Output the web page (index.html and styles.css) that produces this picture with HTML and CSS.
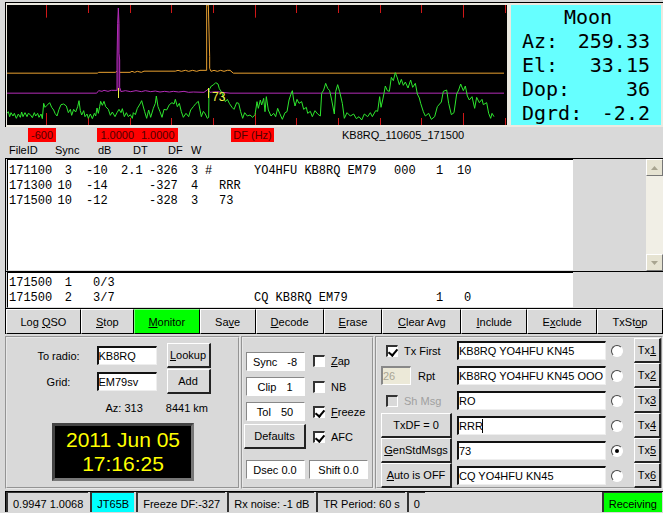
FILE: index.html
```
<!DOCTYPE html>
<html lang="en">
  <head>
    <meta charset="UTF-8" />
    <meta name="viewport" content="width=device-width, initial-scale=1.0" />
    <title>WSJT</title>
    <link rel="stylesheet" href="styles.css">
  </head>
  <body>
    <main class="app">
      <!-- Spectrum and moon data -->
      <section class="top">
        <svg class="graph" viewBox="21 15 1500 360" role="img" aria-label="Spectrum">
          <rect x="21" y="15" width="1500" height="360" fill="#000" />
          <g stroke="#d01818" stroke-width="3">
            <path d="M139.500 15V53M265.500 15V39M391.500 15V39M514.500 15V39M640.500 15V39M766.500 15V53M889.500 15V39M1015.500 15V39M1141.500 15V39M1264.500 15V39M1390.500 15V53M1516.500 15V39" />
            <path d="M139.500 339V375M265.500 354V375M391.500 354V375M514.500 354V375M640.500 354V375M766.500 339V375M889.500 354V375M1015.500 354V375M1141.500 354V375M1264.500 354V375M1390.500 339V375M1516.500 354V375" />
          </g>
          <g fill="none" stroke-width="3">
            <path stroke="#e8a030" d="M21 219.500H292L296 217H346L354 212L360 217H390L396 214L404 217L412 214L424 217L432 213.500H526L534 211L544 214L556 211L566 214L578 211L590 214L600 211H620V15H625L629 170V205L633 214L642 211L652 214L662 211L672 214L682 211L690 211L700 219.500H1512" />
            <path fill="#54105c" stroke="#b42cb8" d="M348 272L351 270V180L353 70L355 24L357 70V160L359 180V262L363 274" />
            <path stroke="#b42cb8" d="M21 279.500H290L296 272L306 274L312 271L324 274L334 271H348M362 275L376 272L392 275L408 272L424 275L436 272L452 275L466 273L480 276L494 274L508 276L520 274L536 276L552 274L566 277L580 276L612 277L624 268L630 277L650 275L690 279.500H1512" />
            <path class="trace" d="M21 340L25 335L29 350L33 338L39 348L43 340L49 355L55 342L61 352L65 336L69 350L75 338L81 350L85 340L91 344L97 353L103 338L107 348L113 340L117 352L123 342L127 356L131 310L135 322L141 316L149 308L155 322L161 330L165 340L171 348L177 328L183 314L191 312L199 318L205 338L211 328L215 346L221 328L227 336L233 320L237 302L241 332L245 345L251 332L255 350L261 342L265 355L271 342L277 356L283 340L287 348L291 324L295 340L299 320L302 304L307 316L312 304L317 320L325 328L331 346L337 336L345 350L351 338L357 328L363 338L367 326L373 350L379 338L385 350L391 344L397 355L400 338L406 344L412 325L420 312L425 302L434 335L440 355L446 330L452 352L460 325L466 310L469 288L474 320L480 335L486 352L492 328L500 330L508 314L516 308L522 312L526 298L532 320L538 310L544 335L550 352L558 340L566 350L572 330L580 320L588 310L595 304L600 330L604 350L610 334L616 342L622 355L626 352L627 270L634 258L640 255L647 248L654 252L658 266L664 275L670 290L676 305L682 298L688 310L696 322L702 328L710 308L716 310L722 335L728 355L734 338L742 348L750 345L758 352L765 344L771 305L775 325L781 300L785 315L791 295L795 335L799 290L805 330L813 348L821 340L827 350L833 325L839 340L847 358L855 338L861 335L867 300L873 282L877 272L881 300L885 318L891 298L897 310L905 305L911 328L919 322L923 340L931 334L937 350L945 332L953 342L961 348L965 280L971 270L977 250L983 265L989 272L995 300L1003 342L1007 275L1013 254L1019 275L1027 310L1033 355L1041 338L1051 348L1061 342L1069 356L1077 350L1085 360L1093 342L1103 350L1111 338L1117 350L1127 332L1133 334L1139 290L1143 322L1148 300L1152 280L1156 258L1162 272L1168 274L1174 232L1180 242L1186 218L1192 234L1198 254L1204 238L1210 256L1216 246L1224 264L1232 240L1238 262L1246 250L1252 282L1258 294L1262 310L1270 335L1276 348L1286 340L1294 358L1304 350L1312 320L1324 306L1330 274L1340 270L1346 310L1354 344L1362 338L1370 282L1376 270L1382 252L1390 272L1396 258L1402 288L1408 300L1416 290L1424 325L1430 292L1438 308L1446 298L1450 314L1460 308L1466 340L1472 355L1476 340L1482 350" />
            <path stroke="#f0f040" d="M355.500 264V294M625.500 264V294" />
          </g>
          <text class="marker" x="636" y="303">73</text>
        </svg>
        <aside class="moon">
          <div class="moon-title">Moon</div>
          <div class="moon-row"><span>Az:</span><span>259.33</span></div>
          <div class="moon-row"><span>El:</span><span>33.15</span></div>
          <div class="moon-row"><span>Dop:</span><span>36</span></div>
          <div class="moon-row"><span>Dgrd:</span><span>-2.2</span></div>
        </aside>
      </section>

      <section class="scale">
        <span class="tag tag-left">-600</span>
        <span class="tag tag-mid"><span>1.0000</span><span>1.0000</span></span>
        <span class="tag tag-df">DF (Hz)</span>
        <span class="filename">KB8RQ_110605_171500</span>
      </section>

      <!-- Decoded text -->
      <section class="decoded">
        <div class="paper">
          <table class="log log-main">
            <thead>
              <tr><th class="c-id">FileID</th><th class="c-sync">Sync</th><th class="c-db">dB</th><th class="c-dt">DT</th><th class="c-df">DF</th><th class="c-w">W</th><th class="c-flag"></th><th class="c-short"></th><th class="c-msg"></th><th class="c-rpt"></th><th class="c-n"></th><th class="c-q"></th></tr>
            </thead>
            <tbody>
              <tr><td>171100</td><td>3</td><td>-10</td><td>2.1</td><td>-326</td><td>3</td><td>#</td><td></td><td>YO4HFU KB8RQ EM79</td><td>000</td><td>1</td><td>10</td></tr>
              <tr><td>171300</td><td>10</td><td>-14</td><td></td><td>-327</td><td>4</td><td></td><td>RRR</td><td></td><td></td><td></td><td></td></tr>
              <tr><td>171500</td><td>10</td><td>-12</td><td></td><td>-328</td><td>3</td><td></td><td>73</td><td></td><td></td><td></td><td></td></tr>
            </tbody>
          </table>
        </div>
        <div class="scrollbar">
          <button class="arrow" type="button" aria-label="Scroll up"><svg width="7" height="4" viewBox="0 0 7 4"><path d="M0 4L3.500 0L7 4Z" fill="#a8a490" /></svg></button>
          <button class="arrow" type="button" aria-label="Scroll down"><svg width="7" height="4" viewBox="0 0 7 4"><path d="M0 0L3.500 4L7 0Z" fill="#a8a490" /></svg></button>
        </div>
      </section>
      <section class="average">
        <div class="paper">
          <table class="log">
            <tbody>
              <tr><td class="c-id">171500</td><td class="c-sync">1</td><td class="c-ratio">0/3</td><td class="c-avg"></td><td class="c-msg"></td><td class="c-rpt"></td><td class="c-n"></td><td class="c-q"></td></tr>
              <tr><td>171500</td><td>2</td><td>3/7</td><td></td><td>CQ KB8RQ EM79</td><td></td><td>1</td><td>0</td></tr>
            </tbody>
          </table>
        </div>
      </section>

      <nav class="toolbar">
        <button type="button">Log <u>Q</u>SO</button>
        <button type="button"><u>S</u>top</button>
        <button type="button" class="on"><u>M</u>onitor</button>
        <button type="button">Sa<u>v</u>e</button>
        <button type="button"><u>D</u>ecode</button>
        <button type="button"><u>E</u>rase</button>
        <button type="button"><u>C</u>lear Avg</button>
        <button type="button"><u>I</u>nclude</button>
        <button type="button">E<u>x</u>clude</button>
        <button type="button">TxSt<u>o</u>p</button>
      </nav>

      <section class="panels">
        <!-- Station -->
        <div class="panel station">
          <div class="station-grid">
            <label for="radio">To radio:</label>
            <input class="entry" id="radio" type="text" value="KB8RQ">
            <button class="btn" type="button"><u>L</u>ookup</button>
            <label for="grid">Grid:</label>
            <input class="entry" id="grid" type="text" value="EM79sv">
            <button class="btn" type="button">Add</button>
          </div>
          <div class="bearing"><span>Az: 313</span><span>8441 km</span></div>
          <div class="clock">2011 Jun 05<br>17:16:25</div>
        </div>

        <!-- Decoder settings -->
        <div class="panel settings">
          <span class="value"><span>Sync</span><span>-8</span></span>
          <label class="check"><input type="checkbox"><span><u>Z</u>ap</span></label>
          <span class="value"><span>Clip</span><span>1</span></span>
          <label class="check"><input type="checkbox"><span>NB</span></label>
          <span class="value"><span>Tol</span><span>50</span></span>
          <label class="check"><input type="checkbox" checked><span><u>F</u>reeze</span></label>
          <button class="btn defaults" type="button">Defaults</button>
          <label class="check"><input type="checkbox" checked><span>AFC</span></label>
          <span class="value tight"><span>Dsec</span><span>0.0</span></span>
          <span class="value tight"><span>Shift</span><span>0.0</span></span>
        </div>

        <!-- Transmit messages -->
        <div class="panel transmit">
          <label class="check"><input type="checkbox" checked><span>Tx First</span></label>
          <input class="entry" type="text" value="KB8RQ YO4HFU KN45" aria-label="Message 1">
          <input type="radio" name="tx" aria-label="Send message 1">
          <button class="btn" type="button">Tx<u>1</u></button>

          <div class="report"><input class="entry" id="rpt" type="text" value="26" disabled><label for="rpt">Rpt</label></div>
          <input class="entry" type="text" value="KB8RQ YO4HFU KN45 OOO" aria-label="Message 2">
          <input type="radio" name="tx" aria-label="Send message 2">
          <button class="btn" type="button">Tx<u>2</u></button>

          <label class="check off"><input type="checkbox" disabled><span>Sh Msg</span></label>
          <input class="entry" type="text" value="RO" aria-label="Message 3">
          <input type="radio" name="tx" aria-label="Send message 3">
          <button class="btn" type="button">Tx<u>3</u></button>

          <button class="btn" type="button">TxDF = 0</button>
          <div class="caret-field"><input class="entry" type="text" value="RRR" aria-label="Message 4"><i class="caret"></i></div>
          <input type="radio" name="tx" aria-label="Send message 4">
          <button class="btn" type="button">Tx<u>4</u></button>

          <button class="btn" type="button"><u>G</u>enStdMsgs</button>
          <input class="entry" type="text" value="73" aria-label="Message 5">
          <input type="radio" name="tx" checked aria-label="Send message 5">
          <button class="btn" type="button">Tx<u>5</u></button>

          <button class="btn" type="button"><u>A</u>uto is OFF</button>
          <input class="entry" type="text" value="CQ YO4HFU KN45" aria-label="Message 6">
          <input type="radio" name="tx" aria-label="Send message 6">
          <button class="btn" type="button">Tx<u>6</u></button>
        </div>
      </section>

      <footer class="status">
        <span>0.9947 1.0068</span>
        <span class="mode">JT65B</span>
        <span>Freeze DF:-327</span>
        <span>Rx noise: -1 dB</span>
        <span>TR Period: 60 s</span>
        <span>0</span>
        <span class="receiving">Receiving</span>
      </footer>
    </main>
  </body>
</html>
```
FILE: styles.css
```
* {
  box-sizing: border-box;
}

body {
  margin: 0;
  background: #d9d9d9;
  color: #000;
  font: 11px/14px "Liberation Sans", Arial, sans-serif;
}

button,
input {
  margin: 0;
  font: inherit;
  color: inherit;
}

u {
  text-underline-offset: 1px;
}

.app {
  padding: 2px 0 0 5px;
}

/* Spectrum and moon data */
.top {
  display: flex;
  border-top: 1px solid #000;
  border-left: 1px solid #000;
  background: #ece9e0;
  padding: 2px 2px 2px 1px;
  gap: 4px;
}

.graph {
  flex: 1;
  min-width: 0;
  display: block;
}

.trace {
  stroke: #2ee62e;
  stroke-width: 3;
}

.marker {
  font-size: 36px;
  fill: #f0f040;
}

.moon {
  width: 150px;
  padding: 0 11px;
  background: #66ffff;
  font: 20px/24px "DejaVu Sans Mono", monospace;
}

.moon-title {
  padding-left: 4px;
  text-align: center;
}

.moon-row {
  display: flex;
  justify-content: space-between;
}

.scale {
  display: flex;
  align-items: flex-start;
  height: 16px;
  padding-top: 1px;
}

.tag {
  height: 14px;
  background: #ff0000;
  color: #500000;
  text-align: center;
}

.tag-left {
  width: 28px;
  margin-left: 23px;
}

.tag-mid {
  display: flex;
  justify-content: space-around;
  width: 81px;
  margin-left: 41px;
}

.tag-df {
  width: 43px;
  margin-left: 53px;
}

.filename {
  margin-left: 68px;
}

/* Decoded text */
.decoded,
.average {
  display: flex;
  justify-content: space-between;
  border-top: 1px solid #000;
  border-left: 1px solid #000;
}

.decoded {
  height: 113px;
  margin-top: 15px;
}

.average {
  height: 37px;
}

.paper {
  flex: 0 1 566px;
  border: solid #000;
  border-width: 1px 0 0 1px;
  margin-left: 1px;
  border-bottom: 1px solid #ddd;
  background: #fff;
}

.log {
  table-layout: fixed;
  width: 476px;
  margin-left: 1px;
  border-collapse: collapse;
  font: 12px/15px "Liberation Mono", "Courier New", monospace;
}

.log th,
.log td {
  height: 15px;
  padding: 0;
  text-align: left;
  white-space: nowrap;
}

.average .log {
  margin-top: 3px;
}

/* column titles sit on the strip above the white area */
.log-main {
  margin-top: -17px;
}

.log .c-id { width: 46px; }
.log .c-sync { width: 31px; }
.log .c-db { width: 35px; }
.log .c-dt { width: 28px; }
.log .c-df { width: 42px; }
.log .c-w { width: 14px; }
.log .c-flag { width: 14px; }
.log .c-short { width: 35px; }
.log .c-ratio { width: 63px; }
.log .c-avg { width: 105px; }
.log .c-msg { width: 140px; }
.log .c-rpt { width: 42px; }
.log .c-n { width: 21px; }
.log .c-q { width: 28px; }

.log-main th {
  height: 21px;
  padding-bottom: 7px;
  font: 11px/14px "Liberation Sans", Arial, sans-serif;
}

.log-main .c-db,
.log-main .c-dt {
  padding-left: 12px;
}

.log-main .c-df {
  padding-left: 19px;
}

.log td:nth-child(2) {
  text-align: right;
  padding-right: 14px;
}

.average td:nth-child(3),
.average td:nth-child(8) {
  padding-left: 7px;
}

.scrollbar {
  display: flex;
  flex-direction: column;
  justify-content: space-between;
  width: 17px;
  background: #f1efe6;
}

.arrow {
  display: flex;
  align-items: center;
  justify-content: center;
  width: 17px;
  height: 17px;
  padding: 0;
  border: 1px solid;
  border-color: #fff #777 #777 #fff;
  background: #e6e3d2;
}

/* Buttons */
.toolbar {
  display: grid;
  grid-template-columns: 75fr 53fr 66fr 56fr 68fr 59fr 79fr 66fr 70fr 66fr;
  border-top: 1px solid #000;
  border-left: 1px solid #000;
}

.toolbar button {
  height: 25px;
  padding: 0;
  border: 1px solid;
  border-color: #fff #000 #000 #fff;
  background: #d9d9d9;
}

.toolbar .on {
  border-color: #7f7 #000 #000 #7f7;
  background: #00ff00;
}

.btn {
  height: 25px;
  padding: 0;
  border: solid;
  border-width: 1px 2px 2px 1px;
  border-color: #fff #222 #222 #fff;
  background: #d9d9d9;
  white-space: nowrap;
}

.entry {
  width: 100%;
  min-width: 0;
  height: 19px;
  padding: 0;
  border: solid;
  border-width: 2px 1px 1px 2px;
  border-color: #111 #eee #eee #111;
  border-radius: 0;
  outline: none;
  background: #fff;
}

.entry:disabled {
  border-color: #888 #fff #fff #888;
  background: #ece9d8;
  color: #aaa695;
}

/* Panels */
.panels {
  display: grid;
  grid-template-columns: minmax(0, 235fr) minmax(0, 133fr) minmax(0, 288fr);
  gap: 1px;
  margin-top: 2px;
}

.panel {
  border: 2px groove #e8e8e8;
  height: 153px;
}

.station {
  padding: 5px 28px 0 24px;
}

.station-grid {
  display: grid;
  grid-template-columns: 56px 60px 44px;
  column-gap: 10px;
  row-gap: 1px;
  align-items: center;
  justify-content: center;
  text-align: center;
}

.bearing {
  display: flex;
  justify-content: flex-end;
  gap: 23px;
  padding: 7px 2px 0 0;
}

.clock {
  width: 142px;
  margin: 8px 0 0 21px;
  padding: 2px 0;
  border: 3px solid;
  border-color: #444 #777 #777 #444;
  background: #000;
  color: #ffff00;
  font-size: 21px;
  line-height: 24px;
  text-align: center;
}

.settings {
  display: grid;
  grid-template-columns: 62px 61px;
  grid-template-rows: 26px 25px 25px 25px 30px;
  column-gap: 2px;
  align-items: center;
  padding: 10px 0 0 1px;
}

.value {
  display: flex;
  justify-content: center;
  gap: 10px;
  width: 59px;
  padding: 2px 0 1px;
  border: 1px solid;
  border-color: #888 #fff #fff #888;
  background: #fff;
  justify-self: center;
}

.tight {
  gap: 3px;
  align-self: end;
}

.check {
  display: flex;
  align-items: center;
  gap: 6px;
  padding-left: 5px;
  white-space: nowrap;
}

.check input {
  appearance: none;
  width: 12px;
  height: 12px;
  border: solid;
  border-width: 2px 1px 1px 2px;
  border-color: #333 #fff #fff #333;
  background: #fff;
}

.check input:checked::before {
  content: "";
  display: block;
  width: 4px;
  height: 7px;
  margin-left: 2px;
  border: solid #000;
  border-width: 0 2px 2px 0;
  transform: rotate(40deg);
}

.check.off {
  color: #a0a0a0;
}

.check.off input {
  background: #d9d9d9;
}

.transmit {
  display: grid;
  grid-template-columns: 71px minmax(0, 1fr) 18px 27px;
  grid-template-rows: repeat(6, 25px);
  column-gap: 5px;
  align-items: center;
  padding: 0 0 0 4px;
}

.transmit input[type="radio"] {
  appearance: none;
  display: flex;
  align-items: center;
  justify-content: center;
  width: 12px;
  height: 12px;
  border: 1px solid;
  border-color: #444 #fff #fff #444;
  border-radius: 50%;
  background: #fff;
}

.transmit input[type="radio"]:checked::before {
  content: "";
  width: 4px;
  height: 4px;
  border-radius: 50%;
  background: #000;
}

.report {
  display: flex;
  align-items: center;
  gap: 7px;
}

.report .entry {
  width: 30px;
}

.caret-field {
  position: relative;
}

.caret {
  position: absolute;
  left: 25px;
  top: 3px;
  width: 1px;
  height: 14px;
  background: #000;
}

/* Status bar */
.status {
  display: flex;
  gap: 2px;
  height: 21px;
  margin-top: 2px;
  overflow: hidden;
  border-top: 1px solid #000;
  border-left: 1px solid #000;
}

.status span {
  padding: 4px 5px 0;
  border: solid #333;
  border-width: 1px 0 0 2px;
  white-space: nowrap;
}

.status .mode {
  background: #00ffff;
}

.status .receiving {
  margin: 0 1px 0 auto;
  background: #00ff00;
}
```
